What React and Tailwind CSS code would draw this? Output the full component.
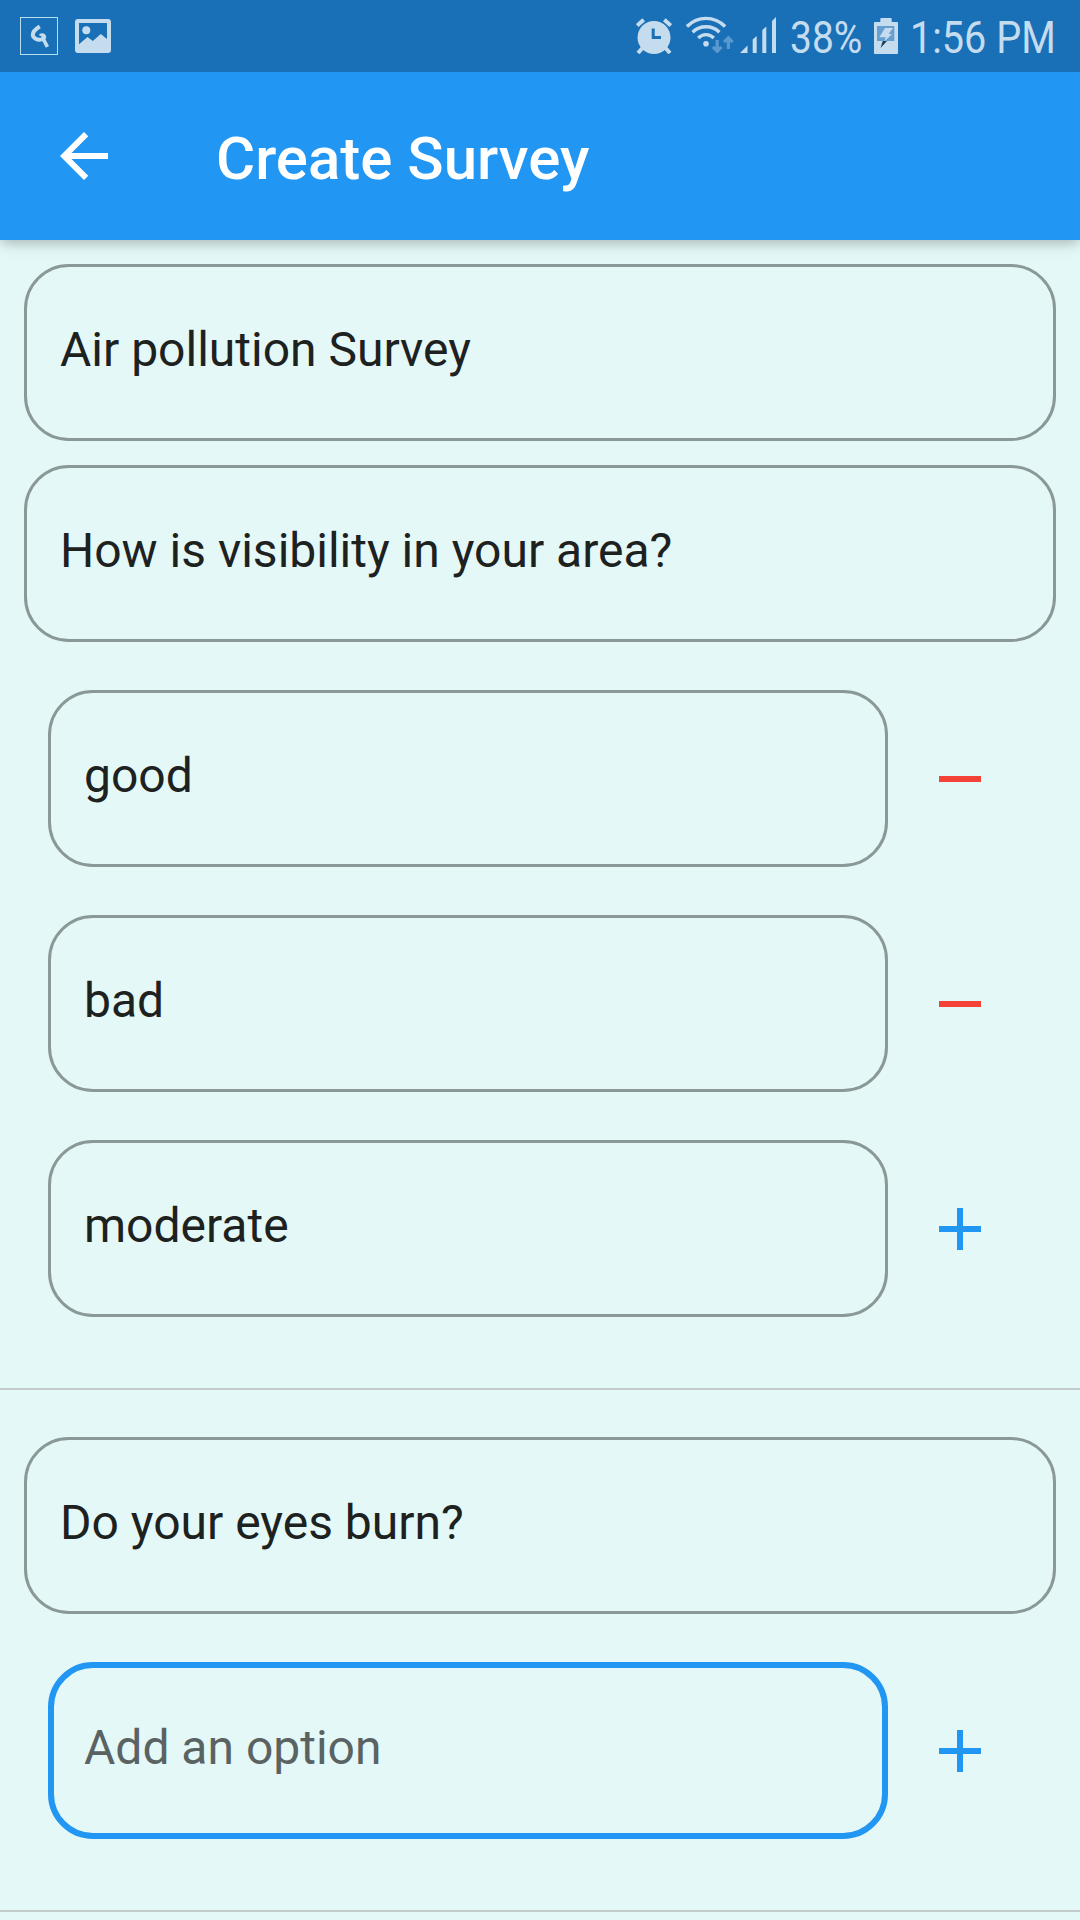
const ROBOTO = "font-['Roboto',sans-serif]";

function BackArrow() {
  return (
    <svg className="size-[72px] shrink-0" viewBox="0 0 24 24" fill="#fff">
      <path d="M20 11H7.83l5.59-5.59L12 4l-8 8 8 8 1.41-1.41L7.83 13H20v-2z" />
    </svg>
  );
}

function StatusBar() {
  return (
    <div className="flex h-[72px] items-start bg-[#1a70b7] text-[#c5dcef]">
      <svg className="ml-5 mt-[17px] h-[38px] w-[38px] shrink-0" viewBox="0 0 38 38" fill="none" stroke="currentColor">
        <rect x=".5" y=".5" width="37" height="37" stroke="#b5deef" />
        <path d="M19.800 9.600C16.500 11.500 12.800 15 12.800 18c.2 3.200 4.600 5.200 8 4.600 3-.6 4.200-2.600 2.700-4-1-.8-2.400-.5-3 .4" strokeWidth="4" />
        <path d="M22.500 20.500l4.900 9.300" strokeWidth="3.600" />
      </svg>
      <svg className="ml-[17px] mt-[19px] h-[34px] w-9 shrink-0" viewBox="0 0 36 34" fill="currentColor">
        <path fillRule="evenodd" d="M3 0h30a3 3 0 0 1 3 3v28a3 3 0 0 1-3 3H3a3 3 0 0 1-3-3V3a3 3 0 0 1 3-3zM4 4v21.300l8.500-7.300 5.300 4 8-7L32 20V4z" />
        <circle cx="11.300" cy="11.200" r="4" />
      </svg>
      <svg className="ml-[525px] mt-[17px] h-[37px] w-9 shrink-0" viewBox="0 0 36 37" fill="none" stroke="currentColor">
        <circle cx="18" cy="20.500" r="16.500" fill="currentColor" stroke="none" />
        <path d="M1.200 8.600L7.700 2.700M34.800 8.600L28.300 2.700" strokeWidth="4" />
        <path d="M6.500 31l-4.500 5M29.500 31l4.500 5" strokeWidth="4" />
        <path d="M17.200 11.500v9H25" stroke="#1a70b7" strokeWidth="3" />
      </svg>
      <svg className="ml-[14px] mt-[16px] h-[38px] w-[49px] shrink-0" viewBox="0 0 49 38" fill="none" stroke="currentColor" strokeWidth="3.400">
        <path d="M.9 10.500C11.600-.4 28.400-.4 39.100 10.500" />
        <path d="M6.600 16.200C13.900 8.900 26.100 8.900 33.400 16.200" />
        <path d="M12.200 22c4.600-4.500 11-4.500 15.600 0" />
        <circle cx="20" cy="27.700" r="2.800" fill="currentColor" stroke="none" />
        <g stroke="#5a98cf" strokeWidth="3.200">
          <path d="M31.200 24v11M26.900 30.800l4.300 4.400 4.300-4.400" />
          <path d="M42.400 33V22M38.100 26.200l4.300-4.400 4.300 4.400" />
        </g>
      </svg>
      <svg className="ml-[5px] mt-[17px] h-9 w-9 shrink-0" viewBox="0 0 36 36" fill="currentColor">
        <path d="M0 36l7.500-7.500V36zM12.700 22.500l4-3.500v17h-4zM22.300 13l4-3.500V36h-4zM32 4l4-4v36h-4z" />
      </svg>
      <div className={`${ROBOTO} ml-[14px] mt-[11px] w-[84px] origin-left scale-x-[0.865] whitespace-nowrap text-[45px] leading-[53px]`}>38%</div>
      <svg className="mt-[18px] h-9 w-6 shrink-0" viewBox="0 0 24 36" fill="currentColor">
        <path d="M7.300 0h9.400a1 1 0 0 1 1 1v3H23a1 1 0 0 1 1 1v30a1 1 0 0 1-1 1H1a1 1 0 0 1-1-1V5a1 1 0 0 1 1-1h5.300V1a1 1 0 0 1 1-1z" />
        <path d="M3 8h17.300v15H3z" fill="#659fd0" />
        <path d="M11 10h8l-4.500 6H18L10 24l1.800-4.700H5.300z" />
        <path d="M8.800 23h4.200l-6.500 7z" fill="#183c58" />
      </svg>
      <div className={`${ROBOTO} ml-[12px] mt-[11px] w-[166px] origin-left scale-x-[0.88] whitespace-nowrap text-[45px] leading-[53px]`}>1:56 PM</div>
    </div>
  );
}

function Field({ text, focused = false, placeholder = false }) {
  return (
    <div
      className={`${ROBOTO} flex h-[177px] flex-1 items-center rounded-[45px] pb-[5px] text-[48px] leading-[56px] ${
        focused ? "border-[6px] border-[#2196f3] pl-[30px]" : "border-[3px] border-[#8a9998] pl-[33px]"
      } ${placeholder ? "text-[#5a6362]" : "text-[#1d2120]"}`}
    >
      {text}
    </div>
  );
}

function Question({ text }) {
  return (
    <div className="flex px-6">
      <Field text={text} />
    </div>
  );
}

function Option({ text, action, focused }) {
  return (
    <div className="mt-12 flex items-center pl-12 pr-[84px]">
      <Field text={text} focused={focused} placeholder={focused} />
      <button className="ml-9 flex size-[72px] items-center justify-center" aria-label={action === "add" ? "Add" : "Remove"}>
        <svg className="size-[72px]" viewBox="0 0 24 24" fill={action === "add" ? "#2196f3" : "#f44336"} shapeRendering="crispEdges">
          {action === "add" ? <path d="M19 13h-6v6h-2v-6H5v-2h6V5h2v6h6v2z" /> : <path d="M19 13H5v-2h14v2z" />}
        </svg>
      </button>
    </div>
  );
}

function Divider() {
  return <div className="mb-[47px] mt-[71px] h-[2px] bg-[#c2cbca]" />;
}

export default function App() {
  return (
    <div className="h-[1920px] w-[1080px] overflow-hidden bg-[#e3f8f7]">
      <header className="relative shadow-[0_6px_12px_-3px_rgba(0,0,0,0.15),0_10px_15px_0_rgba(0,0,0,0.04),0_3px_8px_0_rgba(0,0,0,0.08)]">
        <StatusBar />
        <div className="flex h-[168px] items-center bg-[#2196f3] pl-12">
          <BackArrow />
          <h1 className={`${ROBOTO} ml-24 pt-[5px] text-[60px] font-medium leading-[70px] text-white`}>Create Survey</h1>
        </div>
      </header>
      <main className="pt-6">
        <Question text="Air pollution Survey" />
        <div className="mt-6">
          <Question text="How is visibility in your area?" />
        </div>
        <Option text="good" action="remove" />
        <Option text="bad" action="remove" />
        <Option text="moderate" action="add" />
        <Divider />
        <Question text="Do your eyes burn?" />
        <Option text="Add an option" action="add" focused />
        <Divider />
      </main>
    </div>
  );
}
